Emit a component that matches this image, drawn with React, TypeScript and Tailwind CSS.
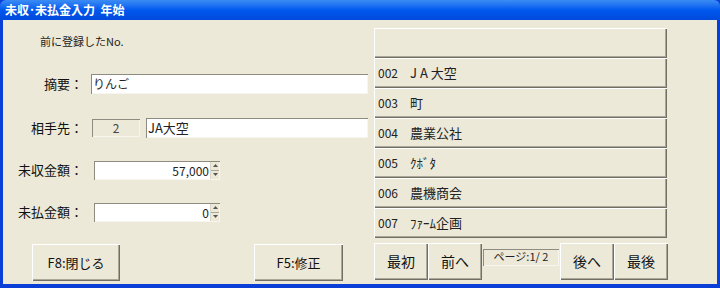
import React from "react";

const font = { fontFamily: '"Noto Sans CJK JP", "Liberation Sans", sans-serif' };

const raised =
  "bg-[#ece9d8] shadow-[inset_1px_1px_0_#ffffff,inset_-1px_-1px_0_#716f64,inset_-2px_-2px_0_#aca899]";
const sunken = "shadow-[inset_1px_1px_0_#8e8c80,inset_-1px_-1px_0_#f6f5ee]";

const suppliers: { code: string; name: React.ReactNode }[] = [
  { code: "", name: "" },
  { code: "002", name: <><span className="tracking-[3px]">JA</span>大空</> },
  { code: "003", name: "町" },
  { code: "004", name: "農業公社" },
  { code: "005", name: "ｸﾎﾞﾀ" },
  { code: "006", name: "農機商会" },
  { code: "007", name: "ﾌｧｰﾑ企画" },
];

function Label({ children }: { children: React.ReactNode }) {
  return <div className="w-[80px] shrink-0 text-right text-[13px] leading-[20px] text-[#111]">{children}</div>;
}

function Spin() {
  return (
    <div className="flex h-full w-[9px] flex-col border-l border-[#d8d5c6] bg-[#ece9d8]">
      <div className="flex flex-1 items-center justify-center border-b border-[#aca899]">
        <svg width="5" height="3" viewBox="0 0 5 3"><path d="M0 3h5L2.5 0z" fill="#555" /></svg>
      </div>
      <div className="flex flex-1 items-center justify-center">
        <svg width="5" height="3" viewBox="0 0 5 3"><path d="M0 0h5L2.5 3z" fill="#555" /></svg>
      </div>
    </div>
  );
}

function NumberBox({ value }: { value: string }) {
  return (
    <div className={`ml-[11px] flex h-[19px] w-[126px] items-stretch bg-white p-[1px] ${sunken}`}>
      <div className="flex-1 pr-[1px] text-right text-[12px] leading-[17px] text-[#222]">{value}</div>
      <Spin />
    </div>
  );
}

export default function App() {
  return (
    <div className="flex h-[288px] w-[720px] flex-col bg-[#0a3fd7] pb-[4px]" style={font}>
      <div className="flex h-[20px] shrink-0 items-center rounded-t-[6px] bg-gradient-to-b from-[#3c8cf5] via-[#0058ee] to-[#0049db] pl-[5px] text-[12px] font-bold text-white">
        未収･未払金入力&nbsp; 年始
      </div>
      <div className="mx-[3px] flex flex-1 bg-[#ece9d8]">
        <div className="flex w-[367px] flex-col">
          <div className="mt-[13px] pl-[37px] text-[11px] leading-[16px] text-[#222]">前に登録したNo.</div>

          <div className="mt-[25px] flex h-[20px] items-center">
            <Label>摘要：</Label>
            <div className={`ml-[8px] h-[20px] w-[277px] bg-white px-[2px] text-[12px] leading-[20px] text-[#222] ${sunken}`}>りんご</div>
          </div>

          <div className="mt-[24px] flex h-[20px] items-center">
            <Label>相手先：</Label>
            <div className={`ml-[9px] h-[18px] w-[48px] text-center text-[12px] leading-[18px] text-[#444] ${sunken}`}>2</div>
            <div className={`ml-[6px] h-[20px] w-[222px] bg-white px-[2px] text-[13px] leading-[20px] text-[#222] ${sunken}`}>JA大空</div>
          </div>

          <div className="mt-[22px] flex h-[20px] items-center">
            <Label>未収金額：</Label>
            <NumberBox value="57,000" />
          </div>

          <div className="mt-[22px] flex h-[20px] items-center">
            <Label>未払金額：</Label>
            <NumberBox value="0" />
          </div>

          <div className="mt-[22px] flex pl-[29px]">
            <button className={`h-[37px] w-[88px] text-[13px] text-[#111] ${raised}`}>F8:閉じる</button>
            <button className={`ml-[134px] h-[37px] w-[89px] text-[13px] text-[#111] ${raised}`}>F5:修正</button>
          </div>
        </div>

        <div className="ml-[4px] flex w-[294px] flex-col pt-[8px]">
          <div className="flex flex-col">
            {suppliers.map((s, i) => (
              <div key={i} className={`flex h-[30px] w-[293px] items-center pl-[4px] text-[13px] text-[#222] ${raised}`}>
                <span className="w-[32px] text-[12px]">{s.code}</span>
                <span>{s.name}</span>
              </div>
            ))}
          </div>
          <div className="mt-[5px] flex h-[37px]">
            <button className={`w-[54px] text-[14px] text-[#111] ${raised}`}>最初</button>
            <button className={`w-[54px] text-[14px] text-[#111] ${raised}`}>前へ</button>
            <div className="w-[78px] px-[1px] pt-[6px]">
              <div className={`h-[17px] text-center text-[11px] leading-[15px] text-[#222] ${sunken}`}>ページ:1/ 2</div>
            </div>
            <button className={`w-[54px] text-[14px] text-[#111] ${raised}`}>後へ</button>
            <button className={`w-[54px] text-[14px] text-[#111] ${raised}`}>最後</button>
          </div>
        </div>
      </div>
    </div>
  );
}
